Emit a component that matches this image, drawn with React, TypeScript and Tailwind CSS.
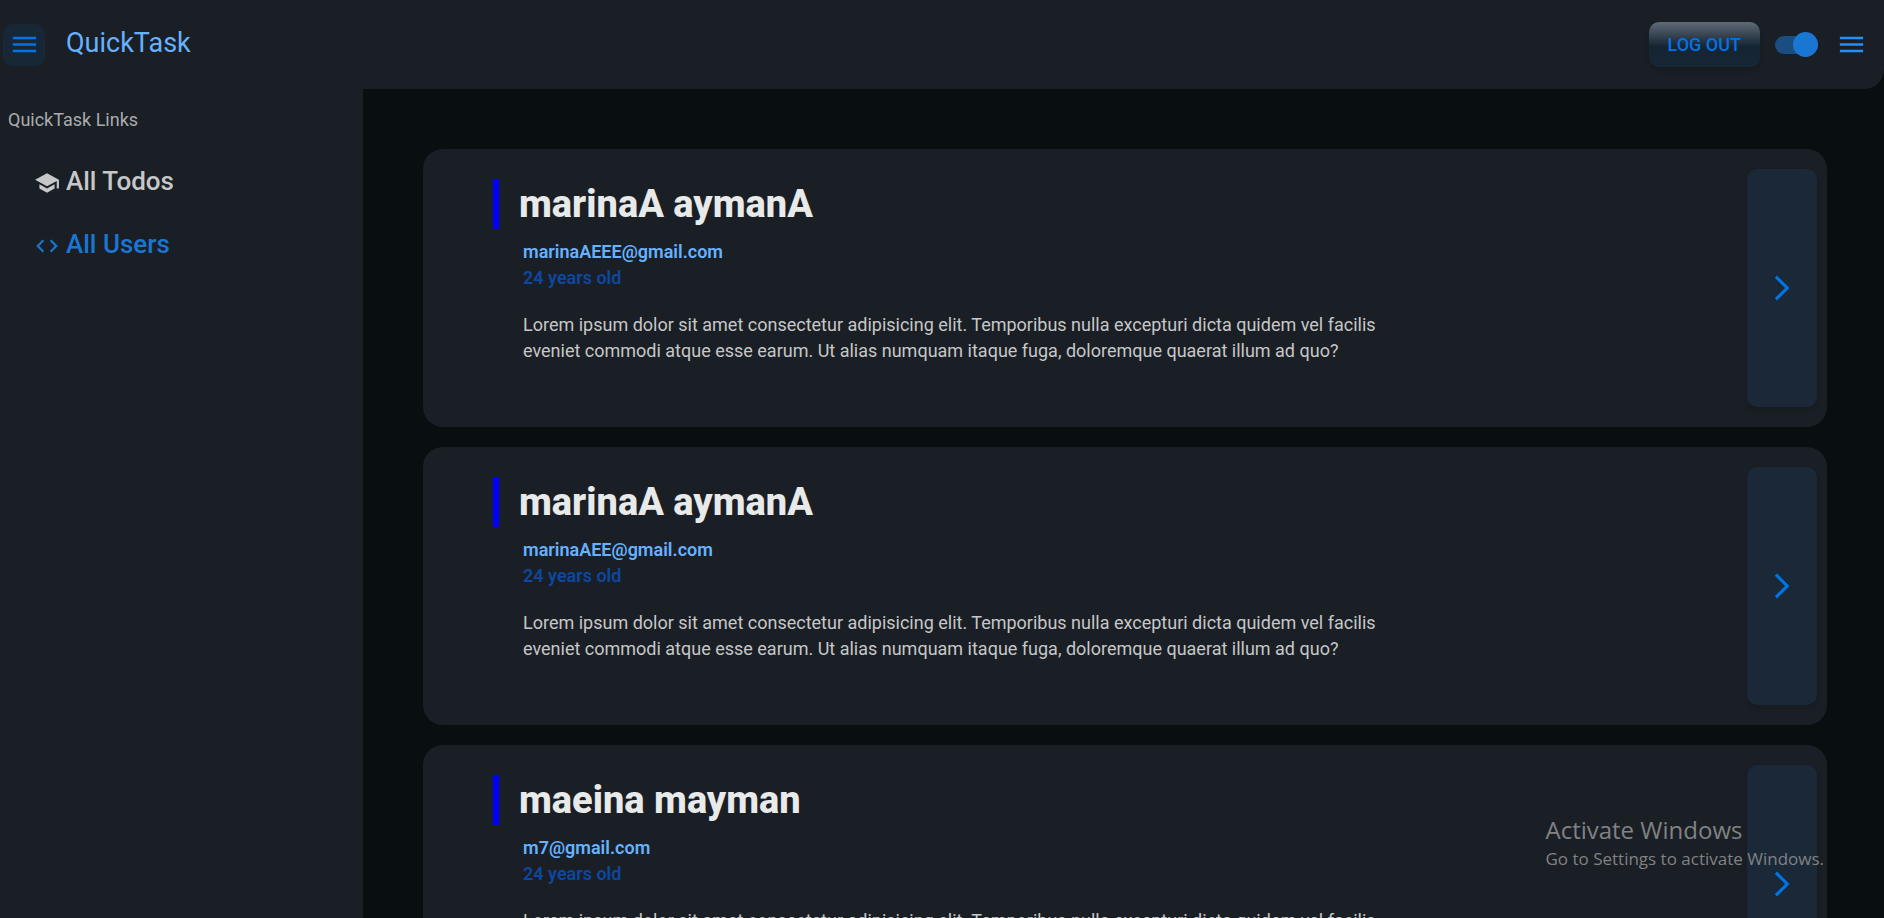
import { useState } from 'react';
import { MdArrowForwardIos, MdCode, MdMenu, MdSchool } from 'react-icons/md';

interface User {
  id: number;
  name: string;
  email: string;
  age: number;
}

const users: User[] = [
  { id: 1, name: 'marinaA aymanA', email: 'marinaAEEE@gmail.com', age: 24 },
  { id: 2, name: 'marinaA aymanA', email: 'marinaAEE@gmail.com', age: 24 },
  { id: 3, name: 'maeina mayman', email: 'm7@gmail.com', age: 24 },
];

const Header = () => {
  const [dark, setDark] = useState<boolean>(true);

  return (
    <header className="flex shrink-0 items-center justify-between rounded-br-[20px] bg-[#1a1f25] pt-[22px] pr-[17px] pb-[22px] pl-[3px]">
      <div className="flex items-center gap-[21px]">
        <button
          type="button"
          aria-label="Toggle sidebar"
          className="flex size-[42px] items-center justify-center rounded-[10px] bg-[#182736] text-[#0073e6]"
        >
          <MdMenu className="size-[31px]" />
        </button>
        <a href="#" className="pb-[3px] text-[27px] leading-[40px] text-[#66b2ff]">
          QuickTask
        </a>
      </div>

      <div className="flex items-center">
        <button
          type="button"
          className="h-[45px] rounded-[10px] bg-linear-to-b from-[#606b77] via-[#152433] via-55% to-[#182736] px-[19px] text-[18px] font-medium text-[#0073e6] shadow-md"
        >
          LOG OUT
        </button>
        <input
          type="checkbox"
          role="switch"
          aria-label="Dark mode"
          checked={dark}
          onChange={() => setDark(!dark)}
          className="mr-[18px] ml-[15px] flex h-[18px] w-[43px] appearance-none items-center rounded-full bg-[#1a4d80] before:size-[25px] before:shrink-0 before:rounded-full before:bg-[#1976d2] checked:justify-end"
        />
        <button type="button" aria-label="Open menu" className="text-[#2090ff]">
          <MdMenu className="size-[31px]" />
        </button>
      </div>
    </header>
  );
};

const Sidebar = () => (
  <aside className="w-[363px] shrink-0 bg-[#1a1f25] px-2 pt-[18px]">
    <h2 className="text-[18px] leading-[26px] text-[#a9abad]">QuickTask Links</h2>
    <nav className="mt-[30px] flex flex-col gap-[23px] pl-[26px] text-[26px] leading-[37px] font-medium">
      <a href="#todos" className="flex items-center gap-[6px] text-[#c6c7c8]">
        <MdSchool className="size-[26px]" />
        <span className="pb-[3px]">All Todos</span>
      </a>
      <a href="#users" className="flex items-center gap-[6px] text-[#1976d2]">
        <MdCode className="size-[26px]" />
        <span className="pb-[3px]">All Users</span>
      </a>
    </nav>
  </aside>
);

const UserCard = ({ user }: { user: User }) => (
  <article className="flex shrink-0 justify-between rounded-[20px] bg-[#1a1f25] py-5 pr-[10px] pl-[70px]">
    <div className="pt-[10px] pb-[43px]">
      <h1 className="border-l-[6px] border-[#0000ff] pl-5 text-[38px] leading-[50px] font-extrabold text-[#e8e9e9]">
        {user.name}
      </h1>
      <div className="mt-[10px] ml-[30px] max-w-[870px] text-[18px] leading-[26px]">
        <p className="font-semibold text-[#66b2ff]">{user.email}</p>
        <p className="font-semibold text-[#0d47a1]">{user.age} years old</p>
        <p className="mt-[21px] text-[#c6c7c8]">
          Lorem ipsum dolor sit amet consectetur adipisicing elit. Temporibus nulla excepturi dicta quidem vel facilis
          eveniet commodi atque esse earum. Ut alias numquam itaque fuga, doloremque quaerat illum ad quo?
        </p>
      </div>
    </div>
    <button
      type="button"
      aria-label={`Open ${user.name}`}
      className="flex w-[70px] shrink-0 items-center justify-center rounded-[10px] bg-[#1a2837] text-[#0073e6] shadow-md"
    >
      <MdArrowForwardIos className="size-[30px]" />
    </button>
  </article>
);

const ActivationNotice = () => (
  <div className="pointer-events-none absolute right-[60px] bottom-[46px] font-['Open_Sans',sans-serif] text-[#808284]">
    <p className="text-[24px] leading-[32px]">Activate Windows</p>
    <p className="text-[17px] leading-[26px]">Go to Settings to activate Windows.</p>
  </div>
);

export default function App() {
  return (
    <div className="relative flex h-screen flex-col overflow-hidden bg-[#090e11] font-[Roboto,sans-serif]">
      <Header />
      <div className="flex min-h-0 flex-1">
        <Sidebar />
        <main className="flex min-w-0 flex-1 flex-col gap-5 overflow-y-auto pt-[60px] pr-[57px] pl-[60px] [scrollbar-width:none]">
          {users.map((user) => (
            <UserCard key={user.id} user={user} />
          ))}
        </main>
      </div>
      <ActivationNotice />
    </div>
  );
}
